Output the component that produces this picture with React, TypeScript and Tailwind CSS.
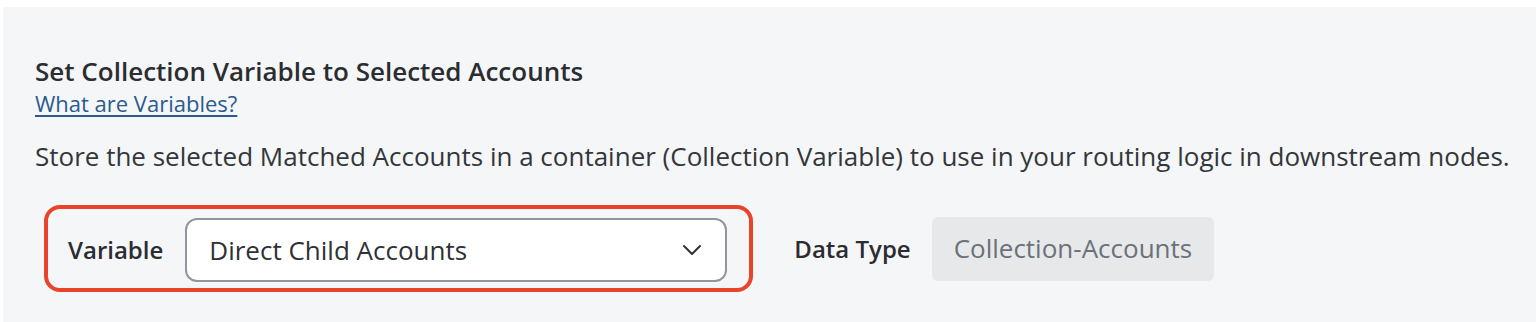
import React from 'react';

const ChevronDown: React.FC = () => (
  <svg width="20" height="12" viewBox="0 0 20 12" fill="none" stroke="currentColor" strokeWidth="2" strokeLinecap="round" strokeLinejoin="round">
    <path d="M2 2l8 8 8-8" />
  </svg>
);

const App: React.FC = () => {
  return (
    <div className="h-[322px] w-[1536px] bg-white pl-[3px] pt-[7px] font-['Open_Sans',sans-serif] text-[#2e3135]">
      <div className="h-full bg-[#f5f6f8] pl-[32px] pt-[48px]">
        <h2 className="text-[26px] leading-[32px] font-semibold text-[#2b2d31]">
          Set Collection Variable to Selected Accounts
        </h2>
        <a href="#" className="mt-[1px] inline-block text-[22px] leading-[30px] text-[#2b5b8e] underline underline-offset-[3px]">
          What are Variables?
        </a>
        <p className="mt-[20px] whitespace-nowrap text-[26px] leading-[36px] text-[#33363a]">
          Store the selected Matched Accounts in a container (Collection Variable) to use in your routing logic in downstream nodes.
        </p>

        <div className="mt-[31px] flex items-center">
          <div className="ml-[9px] flex items-center gap-[22px] rounded-[16px] border-4 border-[#e9432a] pt-[9px] pb-[6px] pl-[20px] pr-[22px]">
            <span className="text-[24px] font-semibold text-[#2b2d31]">Variable</span>
            <div className="flex h-[64px] w-[542px] items-center justify-between rounded-[12px] border-2 border-[#8f969d] bg-white pl-[22px] pr-[23px]">
              <span className="text-[26px] text-[#2e3135]">Direct Child Accounts</span>
              <span className="text-[#2e3135]">
                <ChevronDown />
              </span>
            </div>
          </div>

          <span className="ml-[41px] text-[24px] font-semibold text-[#2b2d31]">Data Type</span>
          <div className="ml-[21px] flex h-[64px] items-center rounded-[6px] bg-[#e7e8ea] px-[22px]">
            <span className="text-[26px] text-[#6b7178]">Collection-Accounts</span>
          </div>
        </div>
      </div>
    </div>
  );
};

export default App;
